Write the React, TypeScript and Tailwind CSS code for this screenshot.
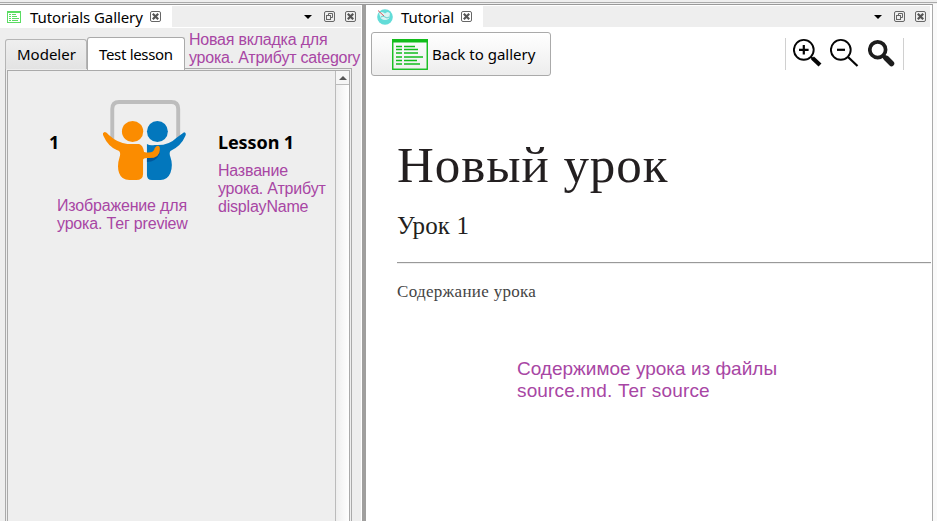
import React from 'react';

const ui = "font-['Noto_Sans','Open_Sans',sans-serif]";
const serif = "font-['Liberation_Serif',serif]";
const note = "absolute whitespace-nowrap font-['Liberation_Sans',sans-serif] text-[#a846a4]";

function CloseIcon() {
  return (
    <svg width="11" height="11" viewBox="0 0 11 11" fill="none">
      <rect x=".5" y=".5" width="10" height="10" rx="1.5" stroke="#666" />
      <path d="M2.800 2.800l5.400 5.400M8.200 2.800l-5.400 5.400" stroke="#555" strokeWidth="2.200" />
    </svg>
  );
}

function DockButtons() {
  return (
    <div className="flex h-[11px] items-center">
      <svg width="8" height="4" viewBox="0 0 8 4"><path d="M0 0h8L4 4z" fill="#000" /></svg>
      <svg className="ml-[12px]" width="11" height="11" viewBox="0 0 11 11" fill="none" stroke="#666">
        <rect x=".5" y=".5" width="10" height="10" rx="1.5" />
        <path d="M4.500 4V2.500h4v4H7" />
        <rect x="2.500" y="4.500" width="4" height="4" />
      </svg>
      <span className="ml-[10px]"><CloseIcon /></span>
    </div>
  );
}

function ListIcon({ className, color }: { className: string; color: string }) {
  return (
    <svg className={className} viewBox="0 0 36 31" preserveAspectRatio="none" fill="none" stroke={color}>
      <rect x=".75" y=".75" width="34.500" height="29.500" strokeWidth="1.400" />
      <path d="M0 1.800h36" strokeWidth="3.600" />
      <path d="M4 7.500h6M4 10.500h6M4 14h6M4 18h6M4 21.500h6M4 25h6" strokeWidth="1.300" />
      <path d="M12 7.500h11M12 10.500h14M12 14h14M12 18h19M12 21.500h13M12 25h16" strokeWidth="1.300" />
    </svg>
  );
}

function SmallListIcon() {
  return (
    <svg width="14" height="12" viewBox="0 0 14 12" fill="none" stroke="#5bdc63">
      <rect x=".5" y=".5" width="13" height="11" />
      <path d="M0 1h14" strokeWidth="2" />
      <path d="M2 3.500h2M5 3.500h4M2 5.500h2M5 5.500h5M2 7.500h2M5 7.500h7M2 9.500h2M5 9.500h6" />
    </svg>
  );
}

function LessonPicture() {
  return (
    <svg className="ml-[44px] h-[84px] w-[84px]" viewBox="0 0 86 84" preserveAspectRatio="none">
      <path d="M9.500 42V9q0-7 7-7h53.500q7 0 7 7v33" fill="none" stroke="#bdbdbd" strokeWidth="4" />
      <ellipse cx="30.300" cy="31.500" rx="10.900" ry="10.500" fill="#fb8c00" />
      <ellipse cx="55.700" cy="31.500" rx="10.700" ry="10.500" fill="#0277bd" />
      <path d="M83 32.200Q86 33 84 36.500Q80 46 69 51Q67.500 53 69 57Q72 65 69 73Q66 80 59 80H50Q45 80 45 75V44Q48 46 53 45Q67 46 75 38Z" fill="#0277bd" />
      <path d="M45 56Q55 57 58 47V54Q54 62 45 62Z" fill="#01579b" />
      <path d="M1.300 32.200Q3 31.500 6 35Q15 43 25 44H37Q41 45 42 52Q52 54 53 48Q56 44 58 47Q60 59 45 58Q41 58 41 60V74Q41 80 34 80H27Q19 80 16.500 73Q14 66 17 57Q19 51 14 50Q5 46 .5 36Q-1 33 1.300 32.200Z" fill="#fb8c00" />
    </svg>
  );
}

function Gallery() {
  return (
    <section className="relative flex w-[362px] shrink-0 flex-col border-r border-white bg-[#eee]">
      <header className="flex h-[23px] border-y border-white">
        <div className="flex w-[172px] items-center bg-white pl-[7px]">
          <SmallListIcon />
          <span className="ml-[9px] w-[120px] whitespace-nowrap text-[15px] leading-5 tracking-[-.08px]">Tutorials Gallery</span>
          <CloseIcon />
        </div>
        <div className="flex flex-1 items-center justify-end pr-[5px]"><DockButtons /></div>
      </header>
      <div className="relative z-10 ml-[5px] flex h-[41px] items-end text-[15px]">
        <div className="flex h-[30px] w-[82px] items-center rounded-t-[3px] border border-b-0 border-[#b5b5b5] bg-linear-to-b from-[#efefef] to-[#e3e3e3] pl-[11px]">
          <span>Modeler</span>
        </div>
        <div className="-mb-px flex h-[33px] w-[98px] items-center whitespace-nowrap rounded-t-[3px] border border-b-0 border-[#aaa] bg-white pl-[11px]">
          <span className="tracking-[-.32px]">Test lesson</span>
        </div>
      </div>
      <div className="-mt-px mb-[-3px] ml-[5px] flex w-[347px] flex-1 border border-[#aaa] p-px">
        <div className="flex flex-1 border border-[#aaa]">
          <div className="flex-1">
            <div className="mt-[29px] flex h-[84px] items-center pl-[41px] text-[18px] font-bold">
              <span className="w-[10px]">1</span>
              <LessonPicture />
              <span className="ml-[31px] whitespace-nowrap tracking-[-.1px]">Lesson 1</span>
            </div>
          </div>
          <div className="w-[14px] border-l border-[#bbb] bg-linear-to-r from-[#eee] to-white">
            <div className="flex h-[14px] items-center justify-center border-b border-[#bbb] bg-[#f5f5f5]">
              <svg width="8" height="4" viewBox="0 0 8 4"><path d="M0 4L4 0l4 4z" fill="#555" /></svg>
            </div>
          </div>
        </div>
      </div>
      <p className={`${note} left-[189px] top-[26px] z-20 text-[16px] leading-[18px] tracking-[-.22px]`}>
        Новая вкладка для<br />урока. Атрибут category
      </p>
      <p className={`${note} left-[57px] top-[192px] text-[16px] leading-[18px] tracking-[-.18px]`}>
        Изображение для<br />урока. Тег preview
      </p>
      <p className={`${note} left-[218px] top-[157px] text-[16px] leading-[18px] tracking-[-.2px]`}>
        Название<br />урока. Атрибут<br />displayName
      </p>
    </section>
  );
}

function ZoomTools() {
  return (
    <div className="mt-[10px] flex h-[32px] w-[119px] items-start border-x border-[#d0d0d0] pl-[7px]">
      <svg width="29" height="30" viewBox="0 0 29 30" fill="none" stroke="#050505">
        <circle cx="10.800" cy="11.800" r="9.900" strokeWidth="1.900" />
        <path d="M6 11.800h9.600M10.800 7v9.600" strokeWidth="2.200" />
        <path d="M18 19l2.500 2.500" strokeWidth="2" />
        <path d="M19.500 20l7.500 7" strokeWidth="4.200" />
      </svg>
      <svg className="ml-[8px]" width="29" height="30" viewBox="0 0 29 30" fill="none" stroke="#050505">
        <circle cx="10.800" cy="11.800" r="9.900" strokeWidth="1.900" />
        <path d="M7 11.800h8" strokeWidth="2.200" />
        <path d="M18 19l9.500 9" strokeWidth="2.200" />
      </svg>
      <svg className="ml-[9px]" width="28" height="30" viewBox="0 0 28 30" fill="none" stroke="#1d1d1d">
        <circle cx="9.700" cy="11.700" r="7.900" strokeWidth="3.700" />
        <path d="M15 17.500l4 4" strokeWidth="4" />
        <path d="M18.300 20.300l5.200 5.200" strokeWidth="5.500" strokeLinecap="round" />
      </svg>
    </div>
  );
}

function Tutorial() {
  return (
    <section className="relative w-[566px] shrink-0 bg-white">
      <header className="flex h-[22px] pr-[2px] pt-px">
        <div className="flex w-[117px] shrink-0 items-center pl-[11px]">
          <svg width="16" height="16" viewBox="0 0 16 16">
            <circle cx="8" cy="8" r="7.800" fill="#62dcd8" />
            <path d="M2 4.500q3-3 6 0 3-3 5 0l-1 5q-4 3-8 0z" fill="#d9f4f3" />
            <path d="M4 8q2-2 4 0t4 0" fill="none" stroke="#62cfcc" />
            <path d="M1 1.500l6 5.500" stroke="#df5a60" />
          </svg>
          <span className="ml-[8px] w-[60px] text-[15px] leading-5 tracking-[-.08px]">Tutorial</span>
          <CloseIcon />
        </div>
        <div className="flex flex-1 items-center justify-end bg-[#eee] pr-[4px]"><DockButtons /></div>
      </header>
      <div className="flex items-start justify-between pl-[5px] pr-[28px] pt-[1px]">
        <button className="mt-[4px] flex h-[44px] w-[180px] items-center rounded-[3px] border border-[#aaa] bg-linear-to-b from-white to-[#ededed] pl-[20px]">
          <ListIcon className="h-[31px] w-[36px]" color="#12bd1c" />
          <span className="ml-[4px] whitespace-nowrap text-[15px] leading-5">Back to gallery</span>
        </button>
        <ZoomTools />
      </div>
      <article className={`${serif} ml-[31px] w-[534px]`}>
        <h1 className="mt-[59px] whitespace-nowrap text-[51px] leading-[60px] tracking-[.95px] text-[#231f20]">Новый урок</h1>
        <h2 className="mt-[16px] text-[25px] leading-[30px] tracking-[.1px] text-[#231f20]">Урок 1</h2>
        <hr className="mt-[21px] h-[2px] border-0 border-t border-[#999] bg-[#eee]" />
        <p className="mt-[18px] text-[17px] leading-5 tracking-[.3px] text-[#444]">Содержание урока</p>
      </article>
      <p className={`${note} left-[151px] top-[353px] text-[19px] leading-[22px]`}>
        Содержимое урока из файлы<br /><span className="tracking-[.15px]">source.md. Тег source</span>
      </p>
    </section>
  );
}

export default function App() {
  return (
    <div className={`${ui} flex h-[521px] w-[937px] flex-col overflow-hidden bg-[#fafafa] text-black`}>
      <div className="h-[3px] shrink-0 border-b border-[#aaa] bg-[#eee]" />
      <div className="h-px shrink-0 bg-[#eee]" />
      <main className="flex min-h-0 flex-1">
        <div className="flex w-[933px] border-r border-t border-r-[#aaa] border-t-[#999]">
          <Gallery />
          <div className="w-[4px] shrink-0 bg-[#a09f9e]" />
          <Tutorial />
        </div>
      </main>
    </div>
  );
}
